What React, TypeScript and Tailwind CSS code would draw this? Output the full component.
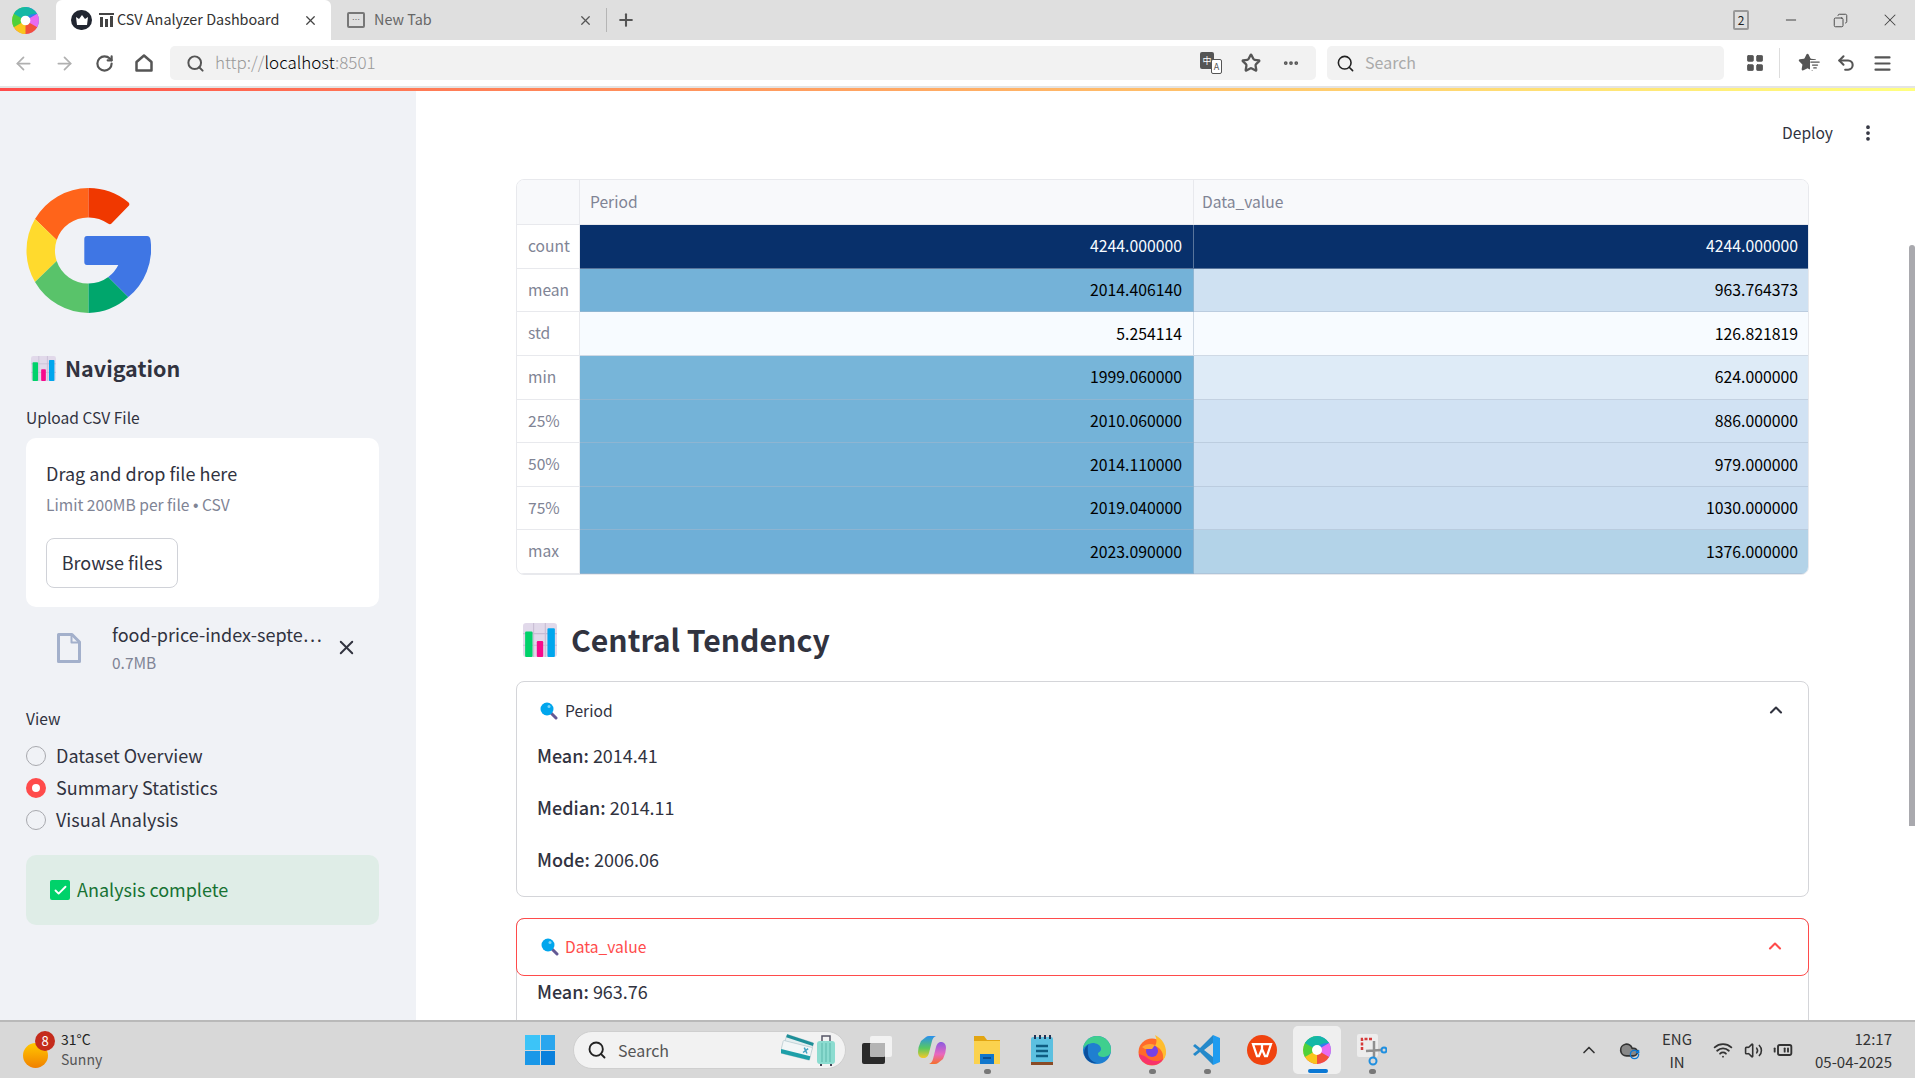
import { ArrowLeft, ArrowRight, RotateCw, Search, X, Minus, Copy, Plus, Ellipsis, ChevronUp, EllipsisVertical, Undo2, Menu, Wifi, Volume2, LayoutGrid, Star, ListFilter, BatteryMedium, Check, Cloud } from "lucide-react";

const tableRows = [
  { name: "count", a: "4244.000000", b: "4244.000000", aBg: "bg-[#08306b] text-[#f7fbff]", bBg: "bg-[#08306b] text-[#f7fbff]" },
  { name: "mean", a: "2014.406140", b: "963.764373", aBg: "bg-[#74b2d8]", bBg: "bg-[#cfe1f2]" },
  { name: "std", a: "5.254114", b: "126.821819", aBg: "bg-[#f7fbff]", bBg: "bg-[#f7fbff]" },
  { name: "min", a: "1999.060000", b: "624.000000", aBg: "bg-[#77b5d9]", bBg: "bg-[#deebf7]" },
  { name: "25%", a: "2010.060000", b: "886.000000", aBg: "bg-[#74b3d8]", bBg: "bg-[#d1e2f3]" },
  { name: "50%", a: "2014.110000", b: "979.000000", aBg: "bg-[#74b2d8]", bBg: "bg-[#cfe0f2]" },
  { name: "75%", a: "2019.040000", b: "1030.000000", aBg: "bg-[#72b1d7]", bBg: "bg-[#cbdef1]" },
  { name: "max", a: "2023.090000", b: "1376.000000", aBg: "bg-[#6fafd7]", bBg: "bg-[#b3d3e8]" },
];

const Swirl = ({ size }: { size: number }) => (
  <svg width={size} height={size} viewBox="0 0 30 30">
    {["#2f80ed", "#e86af0", "#f2503c", "#f9c51d", "#4fd13a", "#14b8a6"].map((color, i) => (
      <path
        key={i}
        d="M15 1A14 14 0 0 1 27 22Q23 13 15 15Z"
        fill={color}
        transform={`rotate(${i * 60} 15 15)`}
      />
    ))}
    <circle cx="15" cy="15" r="5" fill="#fff" />
  </svg>
);

const ChartEmoji = ({ size }: { size: number }) => (
  <svg width={size} height={size} viewBox="0 0 32 32">
    <rect x="0" y="0" width="32" height="32" rx="3" fill="#e1d9ea" />
    <path d="M10 0v32M21 0v32M0 10h32M0 21h32" stroke="#c7bcd3" strokeWidth="1" />
    <rect x="2" y="8" width="7" height="24" rx="1" fill="#00d26a" />
    <rect x="13" y="17" width="6" height="15" rx="1" fill="#f70a8d" />
    <rect x="23" y="5" width="7" height="27" rx="1" fill="#00a6ed" />
  </svg>
);

const LensEmoji = () => (
  <svg width="18" height="18" viewBox="0 0 18 18">
    <path d="M10.5 10.5 16 16" stroke="#635994" strokeWidth="3" strokeLinecap="round" />
    <circle cx="7" cy="7" r="6.5" fill="#00a6ed" />
    <circle cx="9" cy="4.5" r="1.5" fill="#7fd4f7" />
  </svg>
);

const GoogleLogo = () => (
  <svg width="125" height="125" viewBox="0 0 125 125" className="block">
    <path d="M62.5 0A62.5 62.5 0 0 0 9 31L30.7 52A33 33 0 0 1 62.5 29.5Z" fill="#ff641a" />
    <path d="M62.5 0A62.5 62.5 0 0 1 102 14Q104.5 16 102.5 18L85.5 35.5Q84 37 82 35.5A33 33 0 0 0 62.5 29.5Z" fill="#f03800" />
    <path d="M9 31A62.5 62.5 0 0 0 9 94L30.7 73A33 33 0 0 1 30.7 52Z" fill="#ffda2d" />
    <path d="M9 94A62.5 62.5 0 0 0 62.5 125V95.5A33 33 0 0 1 30.7 73Z" fill="#59c36a" />
    <path d="M62.5 125A62.5 62.5 0 0 0 102.3 109L82.3 89A33 33 0 0 1 62.5 95.5Z" fill="#00a66c" />
    <path d="M61 48H121Q124 48 124.5 52A62.5 62.5 0 0 1 102.3 109L82.3 89A33 33 0 0 0 92.3 77H61Q58.3 77 58.3 74V51Q58.3 48 61 48Z" fill="#3f76e4" />
  </svg>
);

const BrowserBar = () => (
  <div className="shrink-0">
    <div className="h-[40px] bg-[#dfdfdf] flex items-end text-[14.4px] leading-[20px]">
      <div className="w-[56px] h-[40px] flex items-center justify-center pr-[5px]">
        <Swirl size={29} />
      </div>
      <div className="w-[275px] h-[40px] bg-white rounded-t-[6px] flex items-center pl-[15px] text-[#333]">
        <span className="w-[21px] h-[20px] rounded-full bg-[#202530] flex items-center justify-center">
          <svg width="12" height="10" viewBox="0 0 12 10"><path d="M0 2l3 2 3-4 3 4 3-2-1 8H1z" fill="#fff" /></svg>
        </span>
        <svg width="15" height="14" viewBox="0 0 15 14" className="ml-[7px] mr-[3px]"><path d="M0 0h15v2H0zM1 4h3v10H1zM6 6h3v8H6zM11 3h3v11h-3z" fill="#444" /></svg>
        <span className="w-[186px] whitespace-nowrap pb-[2px]">CSV Analyzer Dashboard</span>
        <X size={15} className="text-[#444]" />
      </div>
      <div className="h-[40px] flex items-center pl-[16px] text-[#666]">
        <span className="w-[18px] h-[16px] border-2 border-[#777] rounded-[2px] flex items-center justify-center text-[8px] leading-[8px]">…</span>
        <span className="ml-[9px] w-[204px] pb-[2px]">New Tab</span>
        <X size={15} className="text-[#555]" />
        <span className="ml-[13px] w-px h-[24px] bg-[#b5b5b5]" />
        <Plus size={20} className="ml-[9px] text-[#555]" strokeWidth={2.5} />
      </div>
      <div className="ml-auto h-[40px] flex items-center text-[#444]">
        <span className="w-[16px] h-[20px] border-2 border-[#999] rounded-[2px] flex items-center justify-center text-[12px] text-[#222]">2</span>
        <Minus size={16} className="ml-[34px]" strokeWidth={1.5} />
        <Copy size={15} className="ml-[34px] -scale-x-100" strokeWidth={1.5} />
        <X size={20} className="ml-[32px] mr-[15px]" strokeWidth={1.25} />
      </div>
    </div>
    <div className="h-[46px] bg-white flex items-center text-[#555]">
      <ArrowLeft size={21} className="ml-[13px] text-[#b0b0b0]" />
      <ArrowRight size={21} className="ml-[20px] text-[#b0b0b0]" />
      <RotateCw size={19} className="ml-[20px]" strokeWidth={2.75} />
      <svg width="20" height="20" viewBox="0 0 20 20" className="ml-[20px]" fill="none" stroke="#555" strokeWidth="2.5" strokeLinejoin="round"><path d="M2.5 9 10 2.5 17.5 9V17.5H2.5Z" /></svg>
      <div className="ml-[16px] w-[1146px] h-[34px] bg-[#f2f2f2] rounded-[5px] flex items-center pl-[16px] pr-[16px]">
        <Search size={19} strokeWidth={2.5} />
        <span className="ml-[10px] text-[17px] leading-[22px] pb-[2px] text-[#999] font-light">http://<span className="text-black">localhost</span>:8501</span>
        <span className="ml-auto relative w-[22px] h-[22px]">
          <span className="absolute left-0 top-0 w-[14px] h-[17px] bg-[#555] rounded-[2px] text-white text-[9px] leading-[17px] text-center">中</span>
          <span className="absolute right-0 bottom-0 w-[11px] h-[15px] bg-white border border-[#555] rounded-[2px] text-[9px] leading-[14px] text-center">A</span>
        </span>
        <Star size={20} className="ml-[19px]" strokeWidth={2.75} />
        <Ellipsis size={18} className="ml-[21px]" strokeWidth={3} />
      </div>
      <div className="ml-[11px] w-[397px] h-[34px] bg-[#f2f2f2] rounded-[5px] flex items-center pl-[9px]">
        <Search size={19} className="text-[#222]" strokeWidth={2} />
        <span className="ml-[10px] text-[16px] leading-[22px] pb-[2px] text-[#aaa]">Search</span>
      </div>
      <LayoutGrid size={20} className="ml-[21px]" fill="#555" strokeWidth={1} />
      <span className="ml-[14px] w-px h-[30px] bg-[#ddd]" />
      <span className="ml-[18px] relative w-[20px] h-[20px]">
        <Star size={19} fill="#555" strokeWidth={2} />
        <ListFilter size={10} className="absolute -right-[2px] bottom-[3px] bg-white" strokeWidth={3} />
      </span>
      <Undo2 size={20} className="ml-[18px]" strokeWidth={2.5} />
      <Menu size={21} className="ml-[16px]" strokeWidth={2.5} />
    </div>
    <div className="h-[2px] bg-[#e4e4e4]" />
    <div className="h-[3px] bg-gradient-to-r from-[#ff4b4b] to-[#ffff80]" />
  </div>
);

const Sidebar = () => (
  <aside className="w-[416px] shrink-0 bg-[#f0f2f6] pl-[26px] pr-[37px] pt-[97px] text-[#31333f]">
    <GoogleLogo />
    <div className="mt-[43px] flex items-center pl-[5px] h-[25px]">
      <ChartEmoji size={25} />
      <h2 className="ml-[9px] text-[21.5px] leading-[25px] pb-[2px] font-semibold">Navigation</h2>
    </div>
    <p className="mt-[24px] text-[15.6px] leading-[24px]">Upload CSV File</p>
    <div className="mt-[9px] h-[169px] bg-white rounded-[10px] pl-[20px] pt-[23px]">
      <p className="text-[18px] leading-[24px]">Drag and drop file here</p>
      <p className="mt-[9px] text-[15.6px] leading-[20px] text-[#808495]">
        Limit 200MB per file <span className="font-['Liberation_Sans',sans-serif]">•</span> CSV
      </p>
      <button className="mt-[22px] w-[132px] h-[50px] pb-[2px] border border-[#d0d2d8] rounded-[8px] bg-white text-[18px]">Browse files</button>
    </div>
    <div className="mt-[16px] pl-[31px] flex items-center h-[49px]">
      <svg width="24" height="30" viewBox="0 0 24 30" fill="none" stroke="#a3b0cb" strokeWidth="3" strokeLinejoin="round" className="shrink-0">
        <path d="M1.5 1.5H15L22.5 9V28.5H1.5Z" />
        <path d="M14.5 1.5V9.5H22.5" strokeWidth="2" />
      </svg>
      <div className="ml-[31px] w-[216px]">
        <p className="-mt-[2px] text-[18px] leading-[24px] whitespace-nowrap">food-price-index-septe…</p>
        <p className="mt-[6px] text-[15.5px] leading-[20px] text-[#808495]">0.7MB</p>
      </div>
      <X size={23} className="ml-[7px] -mt-[1px]" strokeWidth={2} />
    </div>
    <p className="mt-[35px] text-[15.6px] leading-[22px]">View</p>
    <div className="mt-[11px] flex flex-col text-[18px]">
      {["Dataset Overview", "Summary Statistics", "Visual Analysis"].map((label, i) => (
        <div key={label} className="h-[32px] flex items-center">
          {i === 1 ? (
            <span className="w-[20px] h-[20px] rounded-full border-[6px] border-[#ff4b4b] bg-white" />
          ) : (
            <span className="w-[20px] h-[20px] rounded-full border border-[#a8a9ae] bg-[#f0f2f6]" />
          )}
          <span className="ml-[10px] pb-[2px]">{label}</span>
        </div>
      ))}
    </div>
    <div className="mt-[19px] h-[70px] bg-[#dfede7] rounded-[10px] flex items-center pl-[24px] text-[#177233] text-[18px]">
      <span className="w-[20px] h-[20px] rounded-[2px] bg-[#00d26a] flex items-center justify-center">
        <Check size={15} color="#fff" strokeWidth={3} />
      </span>
      <span className="ml-[7px] pb-[1px]">Analysis complete</span>
    </div>
  </aside>
);

const StatsTable = () => (
  <div className="grid grid-cols-[63px_614px_616px] grid-rows-[45px_repeat(8,minmax(0,1fr))] h-[396px] border border-[#e8e9ed] rounded-[8px] overflow-hidden text-[15.8px] text-black">
    <div className="bg-[#f8f9fb] border-r border-b border-[#e8e9ed]" />
    <div className="bg-[#f8f9fb] border-r border-b border-[#e8e9ed] flex items-center pl-[10px] text-[#808495] text-[15.6px]">Period</div>
    <div className="bg-[#f8f9fb] border-b border-[#e8e9ed] flex items-center pl-[8px] text-[#808495] text-[15.6px]">Data_value</div>
    {tableRows.map((row) => (
      <div key={row.name} className="contents">
        <div className="border-r border-b border-[#e8e9ed] flex items-center pl-[11px] pb-[1px] text-[#808495] text-[15.6px]">{row.name}</div>
        <div className={`border-r border-b border-[#a8b8cc]/50 flex items-center justify-end pr-[11px] ${row.aBg}`}>{row.a}</div>
        <div className={`border-b border-[#a8b8cc]/50 flex items-center justify-end pr-[12px] ${row.bBg}`}>{row.b}</div>
      </div>
    ))}
  </div>
);

const Stat = ({ label, value }: { label: string; value: string }) => (
  <p className="h-[26px] mb-[26px] text-[18px] leading-[26px]">
    <span className="font-medium">{label}:</span> {value}
  </p>
);

const Main = () => (
  <main className="flex-1 bg-white text-[#31333f] overflow-hidden relative">
    <div className="h-[88px] pb-[4px] pr-[37px] flex items-center justify-end">
      <span className="text-[15.6px]">Deploy</span>
      <EllipsisVertical size={20} className="ml-[25px]" strokeWidth={2.5} />
    </div>
    <div className="pl-[100px] pr-[106px]">
      <StatsTable />
      <div className="mt-[45px] h-[40px] flex items-center pl-[7px]">
        <ChartEmoji size={34} />
        <h2 className="ml-[14px] text-[30.2px] leading-[40px] pb-[2px] font-semibold">Central Tendency</h2>
      </div>
      <div className="mt-[21px] h-[216px] border border-[#d4d5d9] rounded-[8px] overflow-hidden">
        <div className="h-[58px] flex items-center pl-[23px] pr-[22px]">
          <LensEmoji />
          <span className="ml-[7px] text-[15.6px] pb-[1px]">Period</span>
          <ChevronUp size={20} className="ml-auto mb-[2px]" strokeWidth={2.5} />
        </div>
        <div className="mt-[2px] pl-[20px]">
          <Stat label="Mean" value="2014.41" />
          <Stat label="Median" value="2014.11" />
          <Stat label="Mode" value="2006.06" />
        </div>
      </div>
      <div className="mt-[21px] h-[216px] border border-[#d4d5d9] rounded-[8px]">
        <div className="-m-px h-[58px] border border-[#ff4b4b] rounded-[8px] flex items-center pl-[24px] pr-[23px] text-[#ff4b4b]">
          <LensEmoji />
          <span className="ml-[6px] text-[15.6px]">Data_value</span>
          <ChevronUp size={20} className="ml-auto mb-[2px]" strokeWidth={2.5} />
        </div>
        <div className="mt-[3px] pl-[20px]">
          <Stat label="Mean" value="963.76" />
        </div>
      </div>
    </div>
    <div className="absolute right-0 top-[154px] w-[6px] h-[581px] rounded-t-[3px] bg-[#a9a9ae]" />
  </main>
);

const taskIcons = [
  <svg key="task" width="30" height="28" viewBox="0 0 30 28"><rect x="8" y="0" width="22" height="21" rx="2" fill="#f2f2f2" /><rect x="0" y="7" width="23" height="21" rx="2" fill="#2a2a2a" /><rect x="8" y="7" width="15" height="14" rx="1" fill="#b4b4b4" /></svg>,
  <svg key="copilot" width="30" height="30" viewBox="0 0 30 30">
    <defs>
      <linearGradient id="copA" x1="0" y1="0" x2="0" y2="1"><stop offset="0" stopColor="#2a8ff0" /><stop offset="0.55" stopColor="#58c860" /><stop offset="1" stopColor="#f5c92a" /></linearGradient>
      <linearGradient id="copB" x1="0" y1="0" x2="0" y2="1"><stop offset="0" stopColor="#8a5ce0" /><stop offset="0.55" stopColor="#e868c0" /><stop offset="1" stopColor="#f5702a" /></linearGradient>
    </defs>
    <path d="M9 2q1-1 3-1h7q-3 1-4 5l-3 12q-1 4-4 5H5q-4-1-4-6 0-5 3-11z" fill="url(#copA)" />
    <path d="M21 28q-1 1-3 1h-6q3-1 4-5l3-12q1-4 4-5h2q4 1 4 6 0 5-3 11z" fill="url(#copB)" />
  </svg>,
  <svg key="explorer" width="30" height="32" viewBox="0 0 30 32"><path d="M2 2h10l3 4h13v24H2z" fill="#e2a512" /><rect x="2" y="7" width="26" height="23" fill="#fbd24e" /><rect x="8" y="20" width="14" height="10" fill="#1177cc" /><rect x="11" y="23" width="8" height="2" fill="#0b4f91" /></svg>,
  <svg key="notepad" width="24" height="32" viewBox="0 0 24 32"><rect x="1" y="3" width="22" height="27" rx="2" fill="#5cc0e0" /><rect x="1" y="28" width="22" height="3" fill="#8a4b26" /><path d="M6 12h12M6 17h12M6 22h12" stroke="#0f5d82" strokeWidth="2.5" /><path d="M5 1v4M10 1v4M15 1v4M20 1v4" stroke="#235" strokeWidth="2" /></svg>,
  <svg key="edge" width="30" height="30" viewBox="0 0 30 30"><circle cx="15" cy="15" r="14" fill="#1f7fd0" /><path d="M15 1a14 14 0 0 1 14 14c0 5-4 7-8 7-3 0-5-1-5-3s3-2 3-5c0-4-5-6-8-6-5 0-9 4-10 6A14 14 0 0 1 15 1z" fill="#3fcf8e" /><path d="M6 18c0 5 4 9 9 10-6 1-12-3-13-10 0-4 2-7 5-9-2 2-1 6-1 9z" fill="#0c4f9c" /></svg>,
  <svg key="firefox" width="30" height="32" viewBox="0 0 30 32"><circle cx="15" cy="18" r="13.5" fill="#ff6a2a" /><path d="M18 1c8 4 11 11 11 17 0 3-1 6-3 8 1-7-2-12-8-14 2-3 2-7 0-11z" fill="#ffbd2e" /><circle cx="15" cy="17" r="6" fill="#7542e5" /><path d="M5 13c4-3 8-4 13-2l-3 4H8z" fill="#ffa436" /><path d="M2 20c0 6 6 11 13 11 5 0 9-2 11-6-4 3-12 3-17-2-3-2-5-2-7-3z" fill="#f8336b" /></svg>,
  <svg key="vscode" width="30" height="32" viewBox="0 0 30 32"><path d="M21 1 8 14 3 10 1 12l5 4-5 4 2 2 5-4 13 13v-8l-9-7 9-7z" fill="#2489ca" /><path d="M21 1l7 3v24l-7 3z" fill="#1f9cf0" /></svg>,
  <svg key="wps" width="30" height="30" viewBox="0 0 30 30"><circle cx="15" cy="15" r="15" fill="#f0430f" /><path d="M6 9h18l-4 12h-2l-3-7-3 7h-2zM15 9v5" stroke="#fff" strokeWidth="2.25" fill="none" /></svg>,
  <Swirl key="swirl" size={30} />,
  <svg key="snip" width="30" height="32" viewBox="0 0 30 32"><rect x="0" y="0" width="21" height="23" rx="2" fill="#ededed" /><path d="M5 16V5h11" fill="none" stroke="#d63a3a" strokeWidth="2.5" strokeDasharray="3 1.5" /><path d="M17 7v16M9 17l15-1" stroke="#8f8f8f" strokeWidth="2.5" /><circle cx="16" cy="27" r="3.5" fill="none" stroke="#1f8fe0" strokeWidth="2" /><circle cx="27" cy="16" r="2.5" fill="none" stroke="#1f8fe0" strokeWidth="2" /></svg>,
];

const Taskbar = () => (
  <footer className="h-[58px] shrink-0 bg-[#d8d8d8] border-t-2 border-[#b9b9b9] flex items-center text-[#333]">
    <div className="w-[525px] pl-[23px] flex items-center">
      <div className="relative w-[38px] h-[30px] mt-[6px]">
        <span className="absolute left-0 bottom-[0px] w-[25px] h-[25px] rounded-full bg-gradient-to-b from-[#ffc800] to-[#f08000]" />
        <span className="absolute left-[12px] -top-[7px] w-[20px] h-[20px] rounded-full bg-[#c42b1c] text-white text-[13px] leading-[19px] text-center">8</span>
      </div>
      <div className="flex flex-col text-[14px] leading-[20px] -mt-[2px]">
        <span className="text-[#222]">31°C</span>
        <span className="text-[#555]">Sunny</span>
      </div>
    </div>
    <div className="w-[30px] h-[30px] grid grid-cols-2 gap-[1px]">
      <span className="bg-[#3cc4f8]" /><span className="bg-[#2aa6ee]" /><span className="bg-[#1a98e8]" /><span className="bg-[#0a80dc]" />
    </div>
    <div className="ml-[18px] w-[273px] h-[38px] rounded-full bg-[#f2f2f2] border border-[#cfcfcf] flex items-center pl-[13px] pr-[10px]">
      <Search size={20} className="text-[#222]" strokeWidth={2.25} />
      <span className="ml-[11px] text-[16px] pb-[1px] text-[#555]">Search</span>
      <svg width="54" height="32" viewBox="0 0 54 32" className="ml-auto">
        <g transform="rotate(18 16 12)">
          <rect x="3" y="4" width="28" height="12" rx="1" fill="#e4eef0" stroke="#9fb8c0" strokeWidth="0.5" />
          <rect x="3" y="4" width="28" height="3" fill="#1e8f98" />
        </g>
        <g transform="rotate(14 16 18)">
          <rect x="0" y="10" width="30" height="13" rx="1" fill="#f2f6f7" stroke="#9fb8c0" strokeWidth="0.5" />
          <rect x="0" y="19" width="30" height="4" fill="#1e9fa8" />
          <path d="M22 12l4 5M26 12l-4 5" stroke="#3fa0c0" strokeWidth="1.5" />
        </g>
        <rect x="36" y="7" width="18" height="23" rx="3" fill="#8cdcd0" />
        <path d="M41 9v19M45 9v19M49 9v19" stroke="#5cb8ac" strokeWidth="1" />
        <path d="M41 7V2h8v5" stroke="#556" strokeWidth="1.5" fill="none" />
        <path d="M40 30v2M50 30v2" stroke="#445" strokeWidth="2" />
      </svg>
    </div>
    <div className="ml-[3.5px] flex">
      {taskIcons.map((icon, i) => (
        <div key={i} className="w-[55px] h-[48px] relative flex items-center justify-center">
          {i === 8 && <span className="absolute left-[3.5px] right-[3.5px] inset-y-0 bg-[#efefef] rounded-[5px]" />}
          <span className="relative flex">{icon}</span>
          {(i === 2 || i === 5 || i === 6 || i === 9) && <span className="absolute bottom-[0px] left-[24px] w-[7px] h-[5px] rounded-full bg-[#777]" />}
          {i === 8 && <span className="absolute bottom-[1px] left-[18px] w-[20px] h-[4px] rounded-full bg-[#0a78d4]" />}
        </div>
      ))}
    </div>
    <div className="ml-auto pr-[23px] flex items-center">
      <span className="w-[40px] flex justify-center"><ChevronUp size={20} /></span>
      <span className="w-[40px] flex justify-center relative"><Cloud size={20} fill="#888" /><RotateCw size={11} className="absolute right-[9px] bottom-0 text-[#0a78d4]" strokeWidth={3} /></span>
      <span className="w-[56px] flex flex-col items-center text-[15px] leading-[23px]"><span>ENG</span><span>IN</span></span>
      <span className="w-[36px] flex justify-center"><Wifi size={20} strokeWidth={2.25} /></span>
      <span className="w-[24px] flex justify-center"><Volume2 size={19} /></span>
      <span className="w-[36px] flex justify-center"><BatteryMedium size={20} className="-scale-x-100" strokeWidth={2.25} /></span>
      <span className="w-[91px] flex flex-col items-end text-[15px] leading-[23px]"><span>12:17</span><span>05-04-2025</span></span>
    </div>
  </footer>
);

export default function App() {
  return (
    <div className="w-[1915px] h-[1078px] flex flex-col overflow-hidden font-['Noto_Sans_CJK_SC','Noto_Sans',sans-serif]">
      <BrowserBar />
      <div className="flex-1 flex overflow-hidden min-h-0">
        <Sidebar />
        <Main />
      </div>
      <Taskbar />
    </div>
  );
}
